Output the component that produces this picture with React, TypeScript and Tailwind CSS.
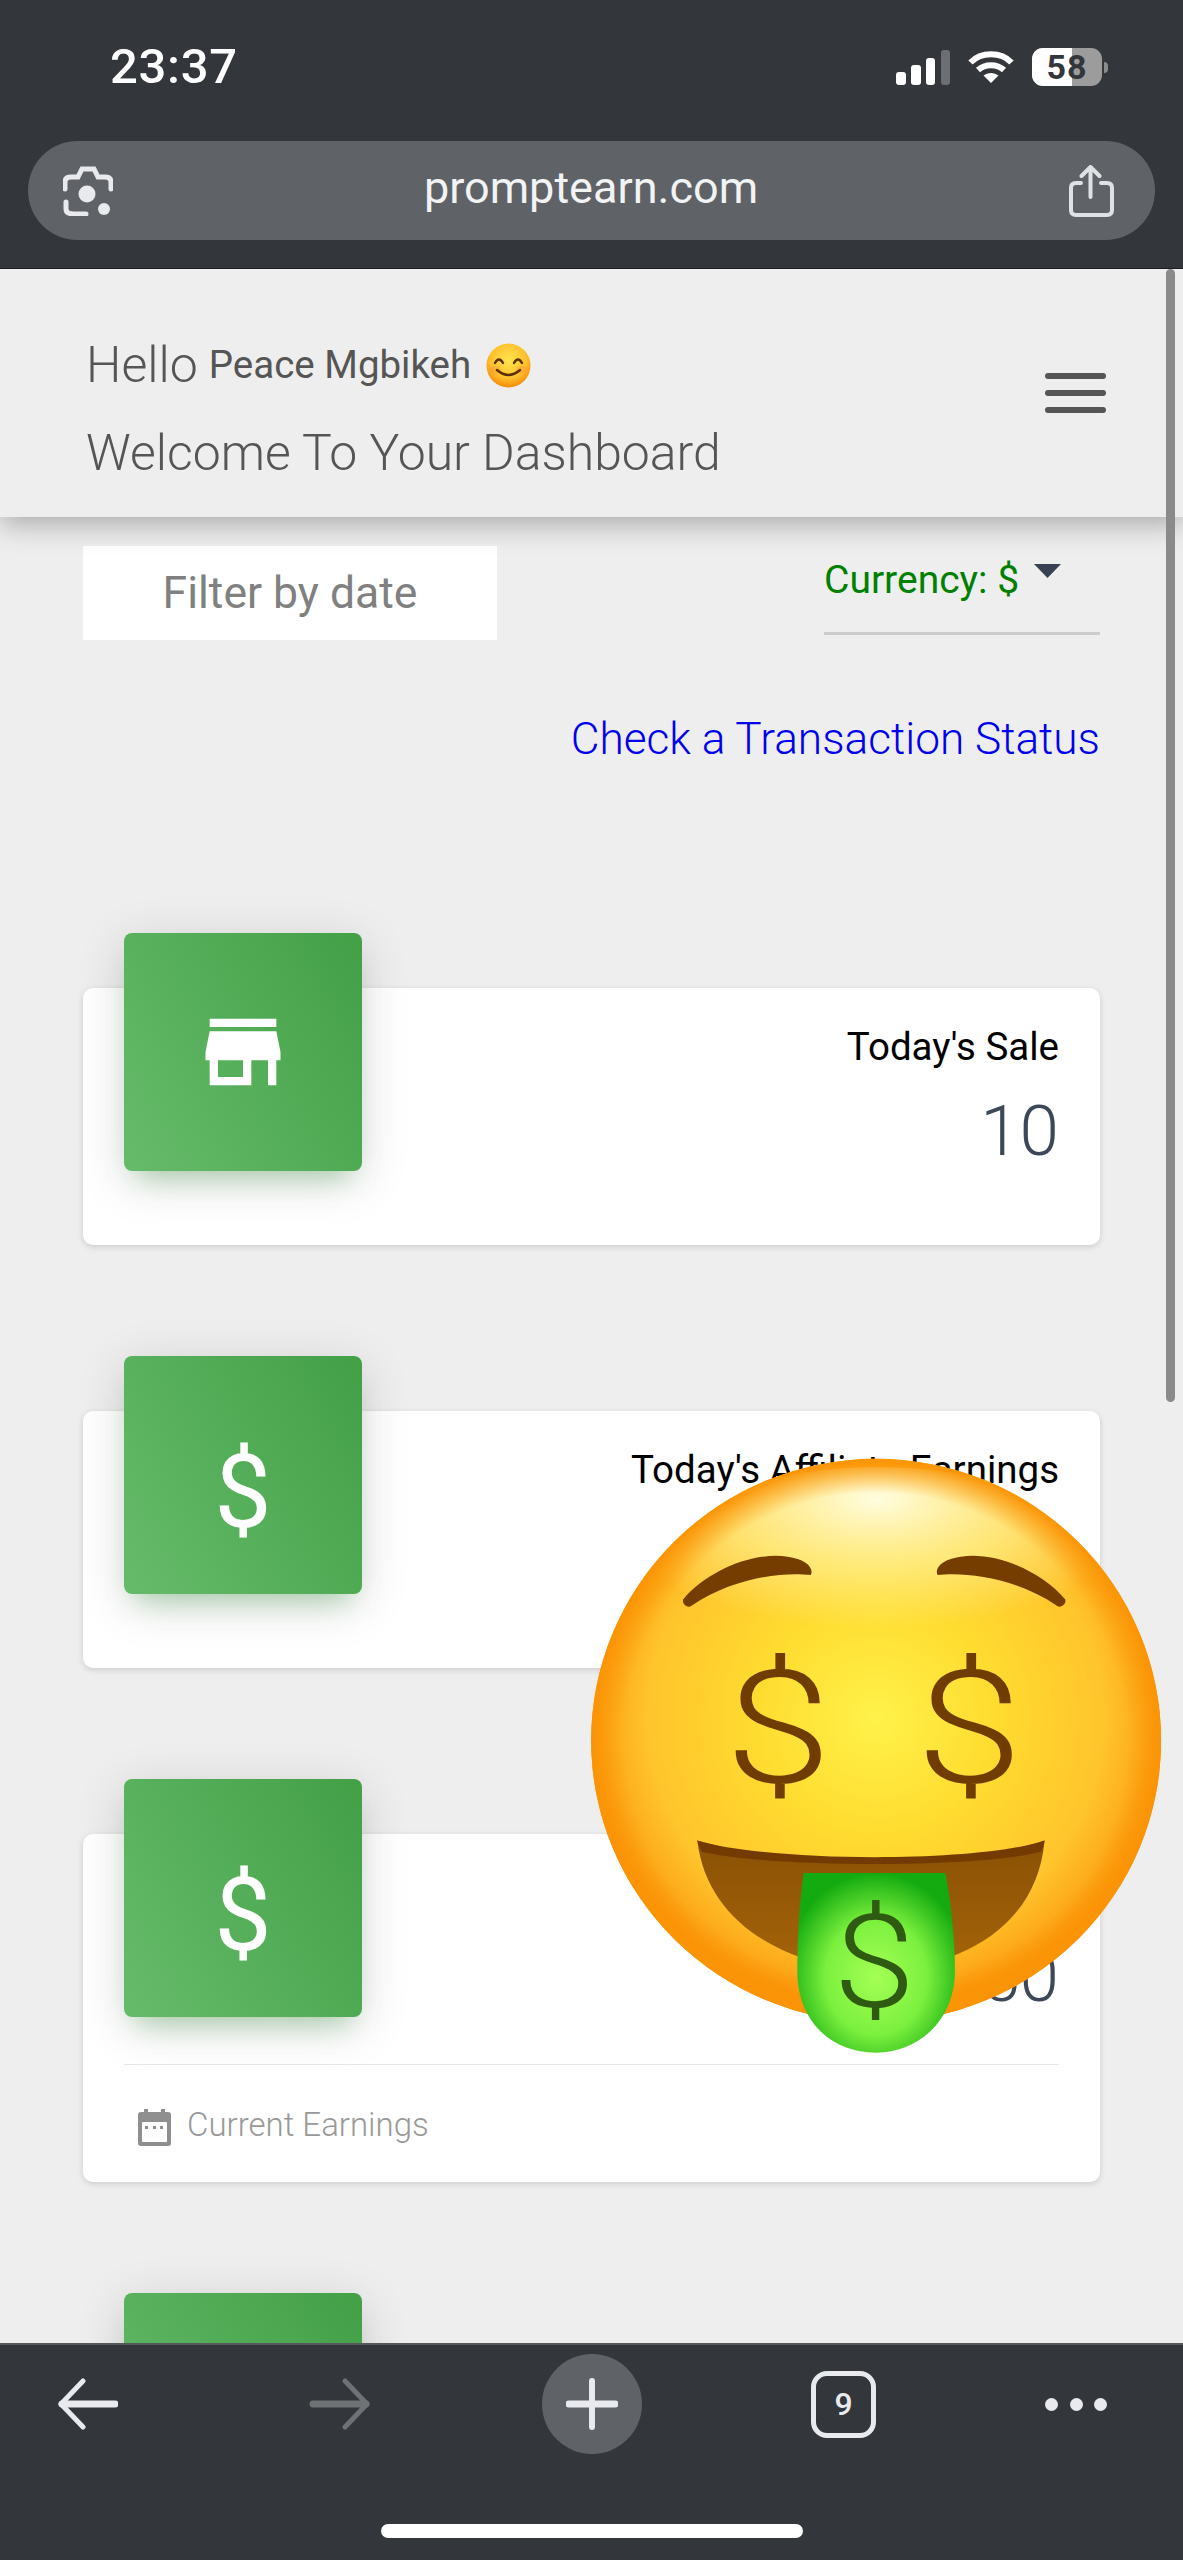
import React from 'react';

const Tile: React.FC<{ children?: React.ReactNode }> = ({ children }) => (
  <div className="relative -mt-[55px] flex h-[238px] w-[238px] shrink-0 items-center justify-center rounded-[8px] bg-[linear-gradient(60deg,#66bb6a,#43a047)] shadow-[0_10px_50px_rgba(0,0,0,0.14),0_18px_26px_-13px_rgba(76,175,80,0.4)]">
    {children}
  </div>
);

const StoreIcon = () => (
  <svg width="100" height="100" viewBox="0 0 24 24" fill="#fff">
    <path d="M20 4H4v2h16V4zm1 10v-2l-1-5H4l-1 5v2h1v6h10v-6h4v6h2v-6h1zm-9 4H6v-4h6v4z" />
  </svg>
);

const Dollar = () => <span className="mt-[33px] text-[102px] leading-[120px] text-white">$</span>;

const CalendarIcon = () => (
  <svg width="33" height="37" viewBox="0 0 33 37" className="shrink-0">
    <rect x="0" y="3" width="33" height="34" rx="3" fill="#8f8f8f" />
    <rect x="6" y="0" width="4" height="6" fill="#8f8f8f" />
    <rect x="23" y="0" width="4" height="6" fill="#8f8f8f" />
    <rect x="4" y="13" width="25" height="20" rx="1" fill="#fff" />
    <rect x="7" y="17" width="3" height="3" fill="#8f8f8f" />
    <rect x="15" y="17" width="3" height="3" fill="#8f8f8f" />
    <rect x="22" y="17" width="3" height="3" fill="#8f8f8f" />
  </svg>
);

const StatCard: React.FC<{
  icon: React.ReactNode;
  title: string;
  value: string;
  footer?: string;
}> = ({ icon, title, value, footer }) => (
  <div className="rounded-[10px] bg-white px-[41px] shadow-[0_2px_6px_rgba(0,0,0,0.14)]">
    <div className="flex h-[183px] justify-between">
      <Tile>{icon}</Tile>
      <div className="pt-[31px] text-right">
        <p className="text-[38.5px] leading-[56px] text-black">{title}</p>
        <p className="mt-[16px] text-[71px] leading-[80px] font-light text-[#3c4858]">{value}</p>
      </div>
    </div>
    {footer ? (
      <div className="mt-[47px] border-t border-[#e8e8e8] pt-[44px] pb-[36px] pl-[14px]">
        <div className="flex items-start gap-[16px]">
          <CalendarIcon />
          <span className="text-[33px] leading-[31px] font-light text-[#999999]">{footer}</span>
        </div>
      </div>
    ) : (
      <div className="h-[74px]" />
    )}
  </div>
);

const SmileEmoji = () => (
  <svg width="45" height="45" viewBox="0 0 45 45" className="ml-[15px] shrink-0">
    <defs>
      <radialGradient id="smileFace" cx="50%" cy="38%" r="62%">
        <stop offset="0%" stopColor="#ffe34d" />
        <stop offset="65%" stopColor="#ffc22e" />
        <stop offset="100%" stopColor="#f58a0b" />
      </radialGradient>
    </defs>
    <circle cx="22.5" cy="22.5" r="22" fill="url(#smileFace)" />
    <ellipse cx="9" cy="27" rx="6" ry="4" fill="#ff9a3c" opacity="0.5" />
    <ellipse cx="36" cy="27" rx="6" ry="4" fill="#ff9a3c" opacity="0.5" />
    <path d="M9 20q4-7 8 0M28 20q4-7 8 0" fill="none" stroke="#5c3106" strokeWidth="2.4" strokeLinecap="round" />
    <path d="M11 27q11.500 10 23 0" fill="none" stroke="#5c3106" strokeWidth="2.4" strokeLinecap="round" />
  </svg>
);

// big sticker; coordinates follow a 1568 square stretched over 603x640
const MoneyFace = () => (
  <svg
    width="603"
    height="640"
    viewBox="0 0 1568 1568"
    preserveAspectRatio="none"
    className="pointer-events-none absolute top-[1151px] left-[580px] z-30"
  >
    <defs>
      <radialGradient id="face" cx="50%" cy="46%" r="51%">
        <stop offset="0%" stopColor="#fff24a" />
        <stop offset="40%" stopColor="#ffdc30" />
        <stop offset="78%" stopColor="#ffc52c" />
        <stop offset="92%" stopColor="#fdab1b" />
        <stop offset="100%" stopColor="#fa9207" />
      </radialGradient>
      <radialGradient id="shine" cx="50%" cy="15%" r="60%">
        <stop offset="0%" stopColor="#fffde0" stopOpacity="1" />
        <stop offset="55%" stopColor="#fff7a0" stopOpacity="0.6" />
        <stop offset="100%" stopColor="#fff3a0" stopOpacity="0" />
      </radialGradient>
      <radialGradient id="rim">
        <stop offset="88%" stopColor="#fa9a0a" stopOpacity="0" />
        <stop offset="100%" stopColor="#fb9405" stopOpacity="1" />
      </radialGradient>
      <radialGradient id="tongue" cx="50%" cy="58%" r="58%">
        <stop offset="0%" stopColor="#a4ff55" />
        <stop offset="55%" stopColor="#7cf03e" />
        <stop offset="100%" stopColor="#14ab10" />
      </radialGradient>
      <linearGradient id="mouth" x1="0" y1="0" x2="0" y2="1">
        <stop offset="0%" stopColor="#8a5104" />
        <stop offset="100%" stopColor="#a5640a" />
      </linearGradient>
      <clipPath id="faceClip">
        <ellipse cx="770" cy="785" rx="741" ry="690" />
      </clipPath>
    </defs>
    <ellipse cx="770" cy="785" rx="741" ry="690" fill="url(#face)" />
    <ellipse cx="770" cy="380" rx="600" ry="265" fill="url(#shine)" clipPath="url(#faceClip)" />
    <ellipse cx="770" cy="785" rx="741" ry="690" fill="url(#rim)" />
    <path d="M268 440C330 370 450 322 540 335C585 340 610 362 600 380C530 372 400 385 290 455C280 462 265 452 268 440Z" fill="#763d00" />
    <path d="M1262 440C1200 370 1080 322 990 335C945 340 920 362 930 380C1000 372 1130 385 1240 455C1250 462 1265 452 1262 440Z" fill="#763d00" />
    <g fontFamily="Roboto, sans-serif" fontWeight="300" textAnchor="middle" fill="#703c00" fontSize="385">
      <text transform="translate(515 887) scale(1.3 1)">$</text>
      <text transform="translate(1012 887) scale(1.3 1)">$</text>
    </g>
    <path d="M305 1030C500 1090 1040 1090 1208 1030C1190 1230 1010 1340 770 1350C530 1340 330 1230 305 1030Z" fill="url(#mouth)" />
    <path d="M305 1030C500 1085 1040 1085 1208 1030C1205 1045 1202 1052 1198 1058C1040 1098 500 1098 316 1058C312 1050 308 1042 305 1030Z" fill="#733b00" />
    <path d="M582 1110H950C965 1180 975 1280 975 1350C975 1470 880 1550 770 1550C650 1550 565 1470 565 1350C565 1280 570 1180 582 1110Z" fill="url(#tongue)" />
    <text
      transform="translate(765 1439) scale(1.2 1)"
      fontSize="320"
      fontFamily="Roboto, sans-serif"
      fontWeight="300"
      textAnchor="middle"
      fill="#2e5a12"
    >
      $
    </text>
  </svg>
);

const StatusIcons = () => (
  <div className="flex items-center">
    {/* signal */}
    <svg width="54" height="36" viewBox="0 0 54 36" className="mt-[2px]">
      <rect x="0" y="22" width="10" height="13" rx="3" fill="#fff" />
      <rect x="15" y="15" width="10" height="20" rx="3" fill="#fff" />
      <rect x="30" y="8" width="9" height="27" rx="3" fill="#fff" />
      <rect x="45" y="0" width="9" height="35" rx="3" fill="#6c6e71" />
    </svg>
    {/* wifi */}
    <svg width="46" height="34" viewBox="0 0 46 34" className="ml-[18px]" fill="none" stroke="#fff" strokeWidth="6">
      <path d="M2.500 12.500C13 1.500 33 1.500 43.500 12.500" />
      <path d="M10 20C17 13.500 29 13.500 36 20" />
      <path d="M23 33L15.500 25.500C20 22 26 22 30.500 25.500Z" fill="#fff" stroke="none" />
    </svg>
    {/* battery */}
    <div className="relative ml-[18px] flex h-[38px] w-[70px] overflow-hidden rounded-[11px] bg-[#9c9c9c]">
      <div className="w-[40px] bg-white" />
      <span className="absolute inset-0 text-center text-[34px] leading-[38px] font-bold tracking-[1px] text-[#33363a]">58</span>
    </div>
    <div className="ml-[2px] h-[11px] w-[4px] rounded-r-full bg-[#8b8c8e]" />
  </div>
);

const LensIcon = () => (
  <svg width="50" height="50" viewBox="13 10 50 50" fill="none" stroke="#e8eaed" strokeWidth="5" strokeLinecap="round">
    <path d="M15 33V26Q15 21 21 21H28L32 13H44L48 21H55Q61 21 61 26V33" />
    <path d="M16 46V53Q16 58 24 58H36" />
    <circle cx="37" cy="38" r="8.500" fill="#e8eaed" stroke="none" />
    <circle cx="54" cy="53" r="6" fill="#e8eaed" stroke="none" />
  </svg>
);

const ShareIcon = () => (
  <svg width="45" height="52" viewBox="14 11 45 52" fill="none" stroke="#dfe1e5" strokeWidth="4" strokeLinecap="round" strokeLinejoin="round">
    <path d="M35.500 43V13M26.500 22L35.500 13L44.500 22" />
    <path d="M26 29H21Q16 29 16 34V56Q16 61 21 61H52Q57 61 57 56V34Q57 29 52 29H46" />
  </svg>
);

const BottomBar = () => (
  <div className="h-[217px] shrink-0 border-t-2 border-[#55585b] bg-[#33363a]">
    <div className="mt-[9px] flex h-[100px] items-center pl-[58px]">
      <svg width="60" height="52" viewBox="0 0 60 52" fill="none" stroke="#e8eaed" strokeLinecap="round" strokeLinejoin="round">
        <path d="M4 26H57" strokeWidth="7" />
        <path d="M25 3L3 26L25 49" strokeWidth="5" />
      </svg>
      <svg width="61" height="52" viewBox="0 0 61 52" fill="none" stroke="#6f7275" strokeLinecap="round" strokeLinejoin="round" className="ml-[191px]">
        <path d="M4 26H57" strokeWidth="7" />
        <path d="M36 3L58 26L36 49" strokeWidth="5" />
      </svg>
      <div className="ml-[172px] flex h-[100px] w-[100px] items-center justify-center rounded-full bg-[#5f6368]">
        <svg width="52" height="52" viewBox="0 0 52 52" stroke="#e8eaed" strokeLinecap="round">
          <path d="M26 3V49" strokeWidth="6" />
          <path d="M3 26H49" strokeWidth="7" />
        </svg>
      </div>
      <div className="ml-[169px] flex h-[67px] w-[65px] items-center justify-center rounded-[16px] border-[5px] border-[#e8eaed] text-[32px] font-medium text-[#e8eaed]">
        9
      </div>
      <div className="ml-[169px] flex w-[62px] justify-between">
        <span className="h-[13px] w-[13px] rounded-full bg-[#e8eaed]" />
        <span className="h-[13px] w-[13px] rounded-full bg-[#e8eaed]" />
        <span className="h-[13px] w-[13px] rounded-full bg-[#e8eaed]" />
      </div>
    </div>
    <div className="mx-auto mt-[70px] h-[14px] w-[422px] rounded-full bg-white" />
  </div>
);

const App: React.FC = () => {
  return (
    <div className="flex h-[2560px] w-[1183px] flex-col overflow-hidden bg-[#eeeeee] font-[Roboto,sans-serif]">
      {/* Browser chrome */}
      <div className="h-[269px] shrink-0 border-b border-[#1b1c1e] bg-[#33363a]">
        <div className="flex h-[134px] items-center justify-between pr-[75px] pl-[110px]">
          <span className="text-[49px] font-medium tracking-[0.7px] text-white">23:37</span>
          <StatusIcons />
        </div>
        <div className="mx-[28px] mt-[7px] flex h-[99px] items-center rounded-full bg-[#5f6368] pr-[41px] pl-[35px]">
          <LensIcon />
          <span className="-mt-[5px] flex-1 text-center text-[45px] text-[#f1f3f4]">promptearn.com</span>
          <ShareIcon />
        </div>
      </div>

      <main className="relative flex-1 overflow-hidden">
        <div className="absolute top-0 left-[1166px] z-20 h-[1133px] w-[9px] rounded-full bg-[#8a8a8a]" />

        <header className="relative z-10 flex h-[248px] items-center justify-between bg-[#eeeeee] pr-[77px] pl-[86px] shadow-[0_8px_26px_rgba(0,0,0,0.28)]">
          <div className="pt-[32px] font-light text-[#555555]">
            <div className="flex h-[88px] items-center text-[50px]">
              Hello
              <span className="ml-[11px] text-[38.5px] font-normal">Peace Mgbikeh</span>
              <SmileEmoji />
            </div>
            <div className="h-[88px] text-[49.9px] leading-[88px]">Welcome To Your Dashboard</div>
          </div>
          <div className="flex w-[61px] flex-col gap-[11px]">
            <span className="h-[6px] rounded-full bg-[#555555]" />
            <span className="h-[6px] rounded-full bg-[#555555]" />
            <span className="h-[6px] rounded-full bg-[#555555]" />
          </div>
        </header>

        <div className="px-[83px]">
          <div className="mt-[29px] flex items-start justify-between">
            <div className="flex h-[94px] w-[414px] items-center justify-center bg-white text-[44.5px] text-[#808080]">
              Filter by date
            </div>
            <div className="flex h-[89px] w-[276px] items-start border-b-[3px] border-[#cccccc] pt-[12px]">
              <span className="text-[39px] leading-[44px] text-[#008000]">Currency: $</span>
              <svg width="27" height="14" viewBox="0 0 27 14" className="mt-[6px] ml-[15px]">
                <polygon points="0,0 27,0 13.500,14" fill="#374151" />
              </svg>
            </div>
          </div>

          <a className="mt-[73px] block text-right text-[44.2px] leading-[52px] font-light text-[#0000ee]">
            Check a Transaction Status
          </a>

          <div className="mt-[223px] flex flex-col gap-[166px]">
            <StatCard icon={<StoreIcon />} title="Today's Sale" value="10" />
            <StatCard icon={<Dollar />} title="Today's Affiliate Earnings" value="$0" />
            <StatCard icon={<Dollar />} title="Total Earnings" value="$1,250" footer="Current Earnings" />
            <StatCard icon={<Dollar />} title="Total Sales" value="0" />
          </div>
        </div>

        <MoneyFace />
      </main>

      <BottomBar />
    </div>
  );
};

export default App;
